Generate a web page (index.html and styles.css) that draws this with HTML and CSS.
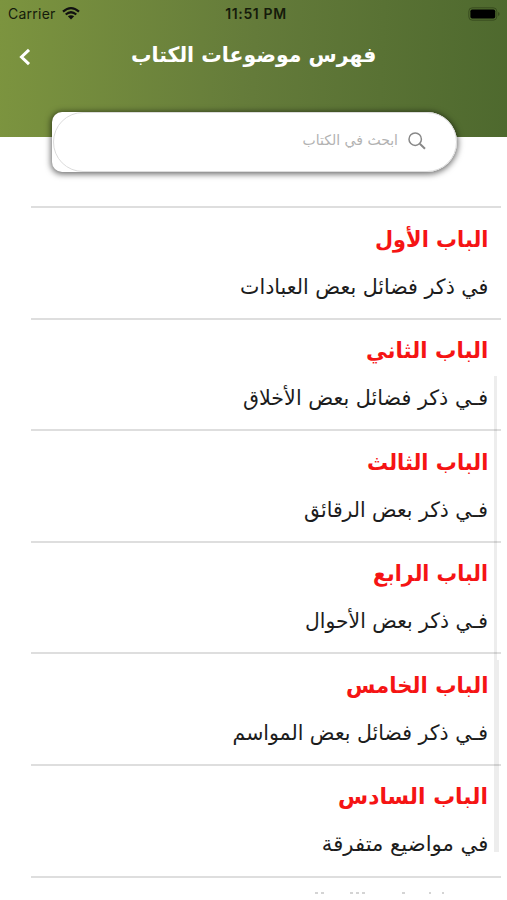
FILE: index.html
```html
<!DOCTYPE html>
<html lang="ar" dir="rtl">
<head>
<meta charset="utf-8">
<meta name="viewport" content="width=device-width, initial-scale=1">
<title>فهرس موضوعات الكتاب</title>
<link rel="stylesheet" href="styles.css">
</head>
<body>
<header class="header">
  <div class="status" dir="ltr">
    <div class="carrier"><span>Carrier</span>
      <svg class="wifi" viewBox="0 0 18 13"><path d="M1 4.7Q9 -2.3 17 4.7M3.7 7.5Q9 3 14.3 7.5" fill="none" stroke="#111" stroke-width="2.2"/><path d="M5.8 9.3Q9 7 12.2 9.3L9 12.5Z" fill="#111"/></svg>
    </div>
    <div class="time">11:51 PM</div>
    <svg class="battery" viewBox="0 0 32 14"><rect x=".8" y=".8" width="28" height="12.4" rx="3.5" fill="none" stroke="#34451c" stroke-width=".8"/><rect x="2.4" y="2.4" width="24.8" height="9.2" rx="1.8" fill="#000"/><path d="M30.2 5v4q1.3-.6 1.3-2t-1.3-2" fill="#34451c"/></svg>
  </div>
  <div class="nav" dir="ltr">
    <svg class="back" viewBox="0 0 12 18"><path d="M10 1.8 2.5 9 10 16.2" fill="none" stroke="#fff" stroke-width="3"/></svg>
    <h1 class="title" dir="rtl">فهرس موضوعات الكتاب</h1>
  </div>
</header>
<div class="search">
  <svg class="glass" viewBox="0 0 18 18"><circle cx="7.2" cy="7.2" r="6.2" fill="none" stroke="#888" stroke-width="1.5"/><path d="m11.8 11.8 5.2 5" stroke="#888" stroke-width="2"/></svg>
  <span class="hint">ابحث في الكتاب</span>
</div>
<main class="list">
  <article class="row first"><h2>الباب الأول</h2><p>في ذكر فضائل بعض العبادات</p></article>
  <article class="row second"><h2>الباب الثاني</h2><p>فـي ذكر فضائل بعض الأخلاق</p></article>
  <article class="row third"><h2>الباب الثالث</h2><p>فـي ذكر بعض الرقائق</p></article>
  <article class="row fourth"><h2>الباب الرابع</h2><p>فـي ذكر بعض الأحوال</p></article>
  <article class="row fifth"><h2>الباب الخامس</h2><p>فـي ذكر فضائل بعض المواسم</p></article>
  <article class="row sixth"><h2>الباب السادس</h2><p>في مواضيع متفرقة</p></article>
  <div class="row last"><svg class="peek" viewBox="0 0 132 2"><path d="M2 1h3M8 1h3M37 1h3M43 1h3M49 1h3M89 1h3M116 1h2M129 1h2" stroke="#d4d4d4" stroke-width="2"/></svg></div>
</main>
<div class="scroll scroll-outer"></div>
<div class="scroll scroll-inner"></div>
</body>
</html>
```

FILE: styles.css
```css
* { box-sizing: border-box; }
body { margin: 0; height: 900px; overflow: hidden; position: relative; background: #fff; font-family: "DejaVu Sans", sans-serif; }
.header { height: 137px; background: linear-gradient(92deg, #7c943f, #647b3a 50%, #4e692e); }
.status { display: grid; grid-template-columns: 1fr auto 1fr; align-items: center; height: 27px; padding: 0 7px 0 8px; font: 14px Inter, sans-serif; color: #151b0b; }
.carrier { display: flex; align-items: center; gap: 6px; letter-spacing: .25px; }
.wifi { width: 18px; height: 13px; }
.time { font-weight: 600; font-size: 14px; letter-spacing: .65px; padding-left: 4px; }
.battery { width: 32px; height: 14px; justify-self: end; }
.nav { display: flex; align-items: center; height: 60px; padding-left: 19px; }
.back { width: 12px; height: 18px; }
.title { margin: 0 0 5px 100px; font-size: 21px; line-height: 30px; color: #fff; white-space: nowrap; transform: scaleX(.973); transform-origin: left; }
.search { position: relative; width: 405px; height: 60px; margin: -25px 50px 0 0; padding: 0 31px 3px 0; display: flex; align-items: center; gap: 10px; background: #fff; border-radius: 10px 30px 30px 10px; box-shadow: 0 1px 6px 1px rgba(0,0,0,.6); }
.search::before { content: ""; position: absolute; inset: 0 0 0 1px; border: 1px solid #dcdcdc; border-radius: 30px; }
.glass { width: 18px; height: 18px; }
.hint { font-size: 14px; color: #b2b2b2; margin-top: -2px; }
.list { height: 689px; margin: 34px 6px 0 31px; overflow: hidden; }
.row { height: 111.6px; border-top: 2px solid #dedede; padding: 14.5px 13px 0 0; }
h2, p { width: max-content; line-height: 34px; transform: scaleX(var(--fit)); transform-origin: right; }
h2 { margin: 0; color: #f51414; font-size: 22px; }
p { margin: 13px 0 0; color: #1c1c1c; font-size: 21px; }
.first h2 { --fit: .95; } .first p { --fit: .98; }
.second h2 { --fit: .968; } .second p { --fit: .984; }
.third h2 { --fit: .953; } .third p { --fit: .968; }
.fourth h2 { --fit: .935; } .fourth p { --fit: .968; }
.fifth h2 { --fit: .966; } .fifth p { --fit: .975; }
.sixth h2 { --fit: .993; } .sixth p { --fit: 1.007; }
.last { padding-right: 56px; }
.peek { display: block; width: 132px; height: 2px; }
.scroll { position: absolute; width: 3px; background: rgba(0,0,0,.07); }
.scroll-outer { left: 494px; top: 376px; height: 476px; }
.scroll-inner { left: 497px; top: 660px; height: 192px; width: 2px; }
```
